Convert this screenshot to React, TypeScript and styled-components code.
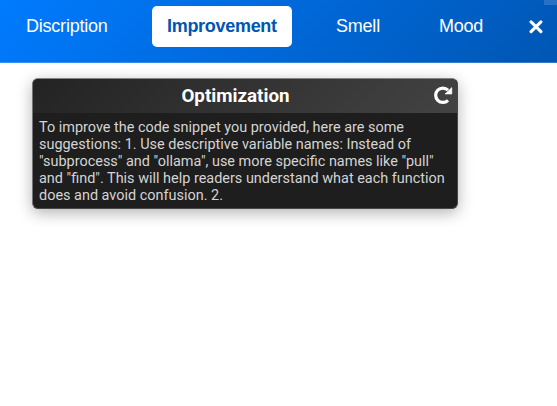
import React from "react";
import styled, { createGlobalStyle } from "styled-components";

const GlobalStyle = createGlobalStyle`
  * { box-sizing: border-box; }
  body { margin: 0; background: #fff; overflow: hidden; }
`;

const Page = styled.div`
  position: relative;
  height: 406px;
  overflow: hidden;
`;

const NavBar = styled.nav`
  display: flex;
  align-items: flex-start;
  height: 63px;
  padding: 6px 0 0 11px;
  border-bottom: 1px solid rgba(255, 255, 255, 0.2);
  background: linear-gradient(135deg, #007bff, #0056b3) border-box;
`;

const Tab = styled.button<{ $active?: boolean; $width: number; $gap: number }>`
  width: ${(p) => p.$width}px;
  height: 41px;
  margin: 0 ${(p) => p.$gap}px 0 0;
  padding: 0 0 1px 15px;
  border: 0;
  border-radius: 5px;
  text-align: left;
  white-space: nowrap;
  font: ${(p) => (p.$active ? 700 : 400)} 18px/40px "Liberation Sans", Arial, sans-serif;
  letter-spacing: ${(p) => (p.$active ? -0.3 : -0.22)}px;
  color: ${(p) => (p.$active ? "#0056b3" : "#fff")};
  background: ${(p) => (p.$active ? "#fff" : "transparent")};
`;

const CloseButton = styled.button`
  display: flex;
  margin-top: 13.5px;
  padding: 0;
  border: 0;
  color: #fff;
  background: none;
`;

const CornerMark = styled.div`
  position: absolute;
  top: 0;
  right: 0;
  width: 13px;
  height: 5px;
  background: rgba(255, 255, 255, 0.15);
`;

const Card = styled.section`
  width: 426px;
  height: 131px;
  margin: 15px 0 0 32px;
  overflow: hidden;
  border: 1px solid #484848;
  border-top-color: #858585;
  border-left-color: #757575;
  border-radius: 6px;
  font-family: Roboto, sans-serif;
  background: #1e1e1e;
  box-shadow: 0 4px 15px rgba(0, 0, 0, 0.3);
`;

const CardHeader = styled.header`
  display: grid;
  grid-template-columns: 1fr 20px;
  align-items: center;
  height: 34px;
  padding: 0 4px;
  color: #fff;
  background: linear-gradient(135deg, #232323, #434343);
`;

const CardTitle = styled.h2`
  margin: 0;
  padding-left: 1px;
  text-align: center;
  font-size: 18.8px;
  font-weight: 700;
  line-height: 34px;
`;

const RefreshButton = styled.button`
  display: flex;
  padding: 0;
  border: 0;
  color: #fff;
  background: none;
`;

const Body = styled.p`
  margin: 0;
  padding: 6px 0 0 6px;
  font-size: 14.45px;
  line-height: 17px;
  white-space: nowrap;
  color: #d4d4d4;
`;

const lines = [
  "To improve the code snippet you provided, here are some",
  "suggestions: 1. Use descriptive variable names: Instead of",
  "\"subprocess\" and \"ollama\", use more specific names like \"pull\"",
  "and \"find\". This will help readers understand what each function",
  "does and avoid confusion. 2.",
];

export default function App() {
  return (
    <Page>
      <GlobalStyle />
      <NavBar>
        <Tab $width={112} $gap={29}>Discription</Tab>
        <Tab $active $width={140} $gap={29}>Improvement</Tab>
        <Tab $width={73} $gap={30}>Smell</Tab>
        <Tab $width={74} $gap={31}>Mood</Tab>
        <CloseButton aria-label="Close">
          <svg width="14" height="14" viewBox="0 0 14 14" fill="none" stroke="currentColor" strokeWidth="3.1" strokeLinecap="round">
            <path d="M2.1 1.8 11.9 11.6M11.9 1.8 2.1 11.6" />
          </svg>
        </CloseButton>
      </NavBar>
      <CornerMark />
      <Card>
        <CardHeader>
          <CardTitle>Optimization</CardTitle>
          <RefreshButton aria-label="Refresh">
            <svg width="20" height="20" viewBox="0 0 20 20" fill="none">
              <path d="M15 4.2A7.2 7.2 0 1 0 15 14.3" stroke="currentColor" strokeWidth="3.2" />
              <path d="M18.8 1.6V8H12Z" fill="currentColor" stroke="currentColor" strokeWidth=".6" strokeLinejoin="round" />
            </svg>
          </RefreshButton>
        </CardHeader>
        <Body>
          {lines.map((line) => (
            <React.Fragment key={line}>{line}<br /></React.Fragment>
          ))}
        </Body>
      </Card>
    </Page>
  );
}
